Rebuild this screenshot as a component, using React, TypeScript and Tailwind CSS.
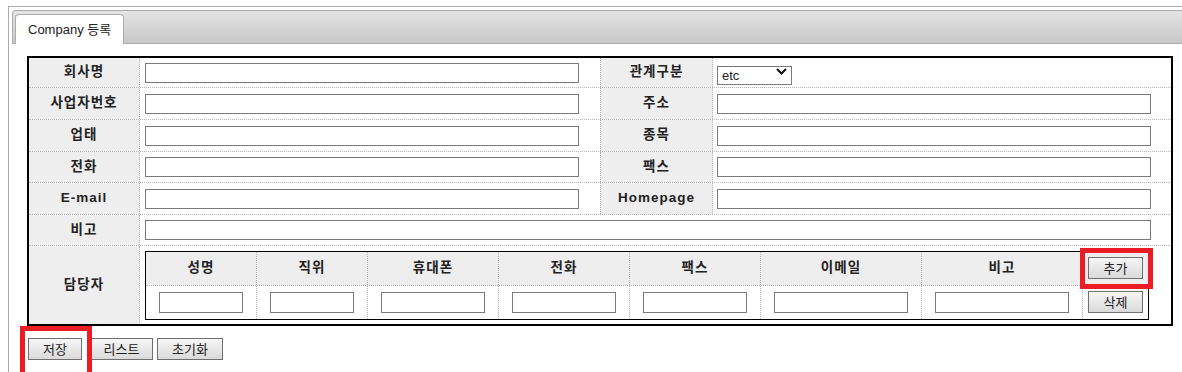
import React from "react";

const font = "font-['Liberation_Sans','Noto_Sans_CJK_KR',sans-serif]";

function TextInput({ w, h = "h-[20px]" }: { w: string; h?: string }) {
  return (
    <input
      type="text"
      className={`${w} ${h} border border-[#7a7a7a] bg-white outline-none px-1 text-[12px]`}
    />
  );
}

function Btn({ label, w }: { label: string; w: string }) {
  return (
    <button
      type="button"
      className={`${w} h-[22px] border border-[#707070] bg-gradient-to-b from-[#f6f6f6] to-[#dadada] text-[13px] text-[#222] leading-none flex items-center justify-center`}
    >
      {label}
    </button>
  );
}

function Label({ children, w = "w-[111px]" }: { children: React.ReactNode; w?: string }) {
  return (
    <div
      className={`${w} shrink-0 bg-[#eeeeee] border-r border-dotted border-[#b5b5b5] flex items-center justify-center text-[13.5px] tracking-[1px] font-bold text-[#222]`}
    >
      {children}
    </div>
  );
}

const rows: { l1: string; l2: string; h: string; select?: boolean }[] = [
  { l1: "회사명", l2: "관계구분", h: "h-[29px]", select: true },
  { l1: "사업자번호", l2: "주소", h: "h-[31px]" },
  { l1: "업태", l2: "종목", h: "h-[31px]" },
  { l1: "전화", l2: "팩스", h: "h-[30px]" },
  { l1: "E-mail", l2: "Homepage", h: "h-[31px]" },
];

// column widths include the dotted right border
const contactCols = [
  { name: "성명", col: "w-[111px]", input: "w-[84px]" },
  { name: "직위", col: "w-[111px]", input: "w-[84px]" },
  { name: "휴대폰", col: "w-[131px]", input: "w-[104px]" },
  { name: "전화", col: "w-[131px]", input: "w-[104px]" },
  { name: "팩스", col: "w-[131px]", input: "w-[104px]" },
  { name: "이메일", col: "w-[161px]", input: "w-[134px]" },
  { name: "비고", col: "w-[161px]", input: "w-[134px]" },
];

export default function App() {
  return (
    <div className={`relative w-[1182px] h-[372px] overflow-hidden bg-white ${font}`}>
      <div className="ml-2 mt-[6px] h-[366px] border-l border-t border-[#acacac] pl-[3px] pt-[3px]">
        {/* tab bar */}
        <div className="h-[34px] border border-r-0 border-[#acacac] rounded-tl-[4px] bg-gradient-to-b from-[#e4e4e4] to-[#c8c8c8] flex items-end pl-[2px]">
          <div className="h-[30px] w-[109px] -mb-px bg-white border border-b-0 border-[#acacac] rounded-t-[4px] flex items-center pl-3 text-[13px] text-[#222]">
            Company 등록
          </div>
        </div>

        <div className="ml-[15px] mt-[12px]">
          {/* main form */}
          <div className="w-[1146px] border-2 border-black">
            {rows.map((r) => (
              <div key={r.l1} className={`flex ${r.h} box-content border-b border-dotted border-[#b5b5b5]`}>
                <Label>{r.l1}</Label>
                <div className="w-[461px] shrink-0 border-r border-dotted border-[#b5b5b5] flex items-center pl-[5px]">
                  <TextInput w="w-[434px]" />
                </div>
                <Label w="w-[112px]">{r.l2}</Label>
                <div className="flex-1 flex items-center pl-[4px]">
                  {r.select ? (
                    <div className="relative w-[75px] h-[19px]">
                      <select className="w-full h-full appearance-none border border-[#7a7a7a] bg-white pl-1 text-[13px] text-[#222] leading-none outline-none">
                        <option>etc</option>
                      </select>
                      <svg
                        className="absolute right-[5px] top-[5px] pointer-events-none"
                        width="11"
                        height="7"
                        viewBox="0 0 11 7"
                      >
                        <path d="M1 1 L5.5 5.5 L10 1" fill="none" stroke="#111" strokeWidth="2" />
                      </svg>
                    </div>
                  ) : (
                    <TextInput w="w-[434px]" />
                  )}
                </div>
              </div>
            ))}

            {/* 비고 */}
            <div className="flex h-[30px] box-content border-b border-dotted border-[#b5b5b5]">
              <Label>비고</Label>
              <div className="flex-1 flex items-center pl-[5px]">
                <TextInput w="w-[1006px]" />
              </div>
            </div>

            {/* 담당자 */}
            <div className="flex h-[78px]">
              <Label>담당자</Label>
              <div className="flex-1 pl-[5px] pt-[5px]">
                <div className="w-[1004px] border border-black">
                  <div className="flex h-[33px] box-content border-b border-dotted border-[#b5b5b5] bg-[#eeeeee]">
                    {contactCols.map((c) => (
                      <div
                        key={c.name}
                        className={`${c.col} shrink-0 border-r border-dotted border-[#b5b5b5] flex items-center justify-center text-[13.5px] tracking-[1px] font-bold text-[#222]`}
                      >
                        {c.name}
                      </div>
                    ))}
                    <div className="flex-1 pl-[5px] pt-[5px]">
                      <Btn label="추가" w="w-[55px]" />
                    </div>
                  </div>
                  <div className="flex h-[33px]">
                    {contactCols.map((c) => (
                      <div
                        key={c.name}
                        className={`${c.col} shrink-0 border-r border-dotted border-[#b5b5b5] flex items-center pl-[13px]`}
                      >
                        <TextInput w={c.input} h="h-[21px]" />
                      </div>
                    ))}
                    <div className="flex-1 pl-[5px] pt-[5px]">
                      <Btn label="삭제" w="w-[55px]" />
                    </div>
                  </div>
                </div>
              </div>
            </div>
          </div>

          {/* bottom buttons */}
          <div className="flex mt-[12px] ml-px">
            <Btn label="저장" w="w-[54px]" />
            <div className="ml-[8px]">
              <Btn label="리스트" w="w-[63px]" />
            </div>
            <div className="ml-[4px]">
              <Btn label="초기화" w="w-[66px]" />
            </div>
          </div>
        </div>
      </div>

      {/* red highlight annotations */}
      <div className="absolute left-[1080px] top-[248px] w-[73px] h-[41px] border-[5px] border-[#ed1c24] pointer-events-none" />
      <div className="absolute left-[20px] top-[326px] w-[72px] h-[52px] border-[5px] border-[#ed1c24] pointer-events-none" />
    </div>
  );
}
